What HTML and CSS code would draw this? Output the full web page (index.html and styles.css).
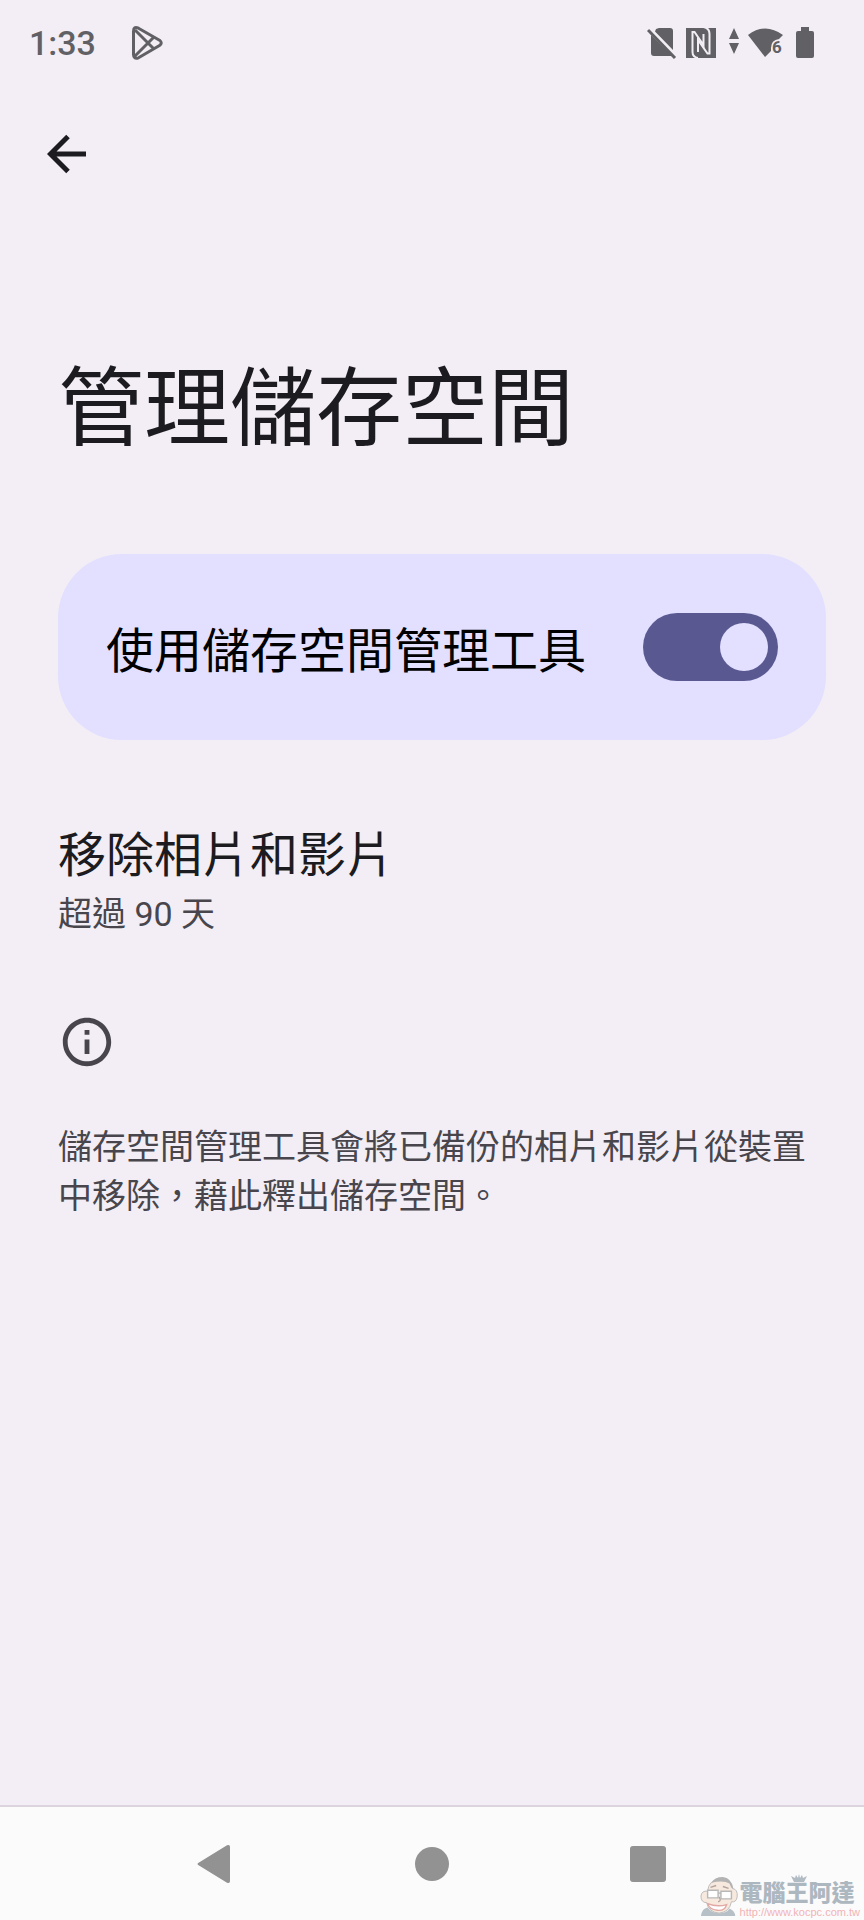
FILE: index.html
```html
<!DOCTYPE html>
<html lang="zh-Hant">
<head>
    <meta charset="UTF-8">
    <meta name="viewport" content="width=device-width, initial-scale=1.0">
    <title>管理儲存空間</title>
    <link rel="stylesheet" href="styles.css">
</head>
<body>
    <div class="status-bar">
        <div class="status-left">
            <span class="clock">1:33</span>
            <svg class="play-icon" width="34" height="36" viewBox="0 0 34 36">
                <path d="M2.500 6.500Q2.500 .8 7.500 3.200L28.500 15.200Q32 18 28.500 20.500L7.500 32.800Q2.500 34.500 2.500 29.500ZM4 5L23 24M4 31L23 12"/>
            </svg>
        </div>
        <div class="status-icons">
            <svg width="30" height="32" viewBox="0 0 30 32">
                <path class="fill" d="M9 2L12 1H23Q26 1 26 4V23L8 4.500ZM4 8L25 29H7Q4 29 4 26Z"/>
                <path class="line" d="M1 3L28 31"/>
            </svg>
            <svg width="32" height="32" viewBox="0 0 32 32">
                <path class="fill" d="M1 1H31V31H1Z"/>
                <path class="cut" d="M13 31Q7.500 30 7.500 25V5H9.500L18.500 18V7"/>
                <path class="cut" d="M13 25V13L22.500 26.500H24.500V7Q24.500 1 18.500 0"/>
            </svg>
            <svg class="arrows" width="10" height="32" viewBox="0 0 10 32">
                <path class="fill" d="M5 1L10 12H0ZM0 16H10L5 27Z"/>
            </svg>
            <svg width="38" height="32" viewBox="0 0 38 32">
                <path class="fill" d="M1 8Q18-5 36 8L32 12Q24 13 24 21V24L18 30Z"/>
                <text x="25" y="26" class="wifi-num">6</text>
            </svg>
            <svg class="battery" width="20" height="32" viewBox="0 0 20 32">
                <path class="fill" d="M6 0H14V4H17Q19 4 19 6V29Q19 31 17 31H3Q1 31 1 29V6Q1 4 3 4H6Z"/>
            </svg>
        </div>
    </div>

    <header class="toolbar">
        <button class="back-button" type="button" aria-label="返回">
            <svg width="40" height="40" viewBox="0 0 40 40">
                <path d="M39 20H4M21 2.500L3.500 20L21 37.500"/>
            </svg>
        </button>
    </header>

    <main class="content">
        <h1 class="page-title">管理儲存空間</h1>

        <div class="switch-card">
            <label for="storageManager">使用儲存空間管理工具</label>
            <input type="checkbox" role="switch" id="storageManager" class="switch" checked>
        </div>

        <button class="preference" type="button">
            <span class="preference-title">移除相片和影片</span>
            <span class="preference-summary">超過 90 天</span>
        </button>

        <div class="footer-info">
            <svg width="58" height="58" viewBox="0 0 24 24">
                <path d="M11 7h2v2h-2zm0 4h2v6h-2zm1-9C6.480 2 2 6.480 2 12s4.480 10 10 10 10-4.480 10-10S17.520 2 12 2zm0 18c-4.410 0-8-3.590-8-8s3.590-8 8-8 8 3.590 8 8-3.590 8-8 8z"/>
            </svg>
            <p>儲存空間管理工具會將已備份的相片和影片從裝置中移除，藉此釋出儲存空間。</p>
        </div>
    </main>

    <nav class="nav-bar">
        <div class="nav-buttons">
            <button type="button" aria-label="返回">
                <svg width="40" height="40" viewBox="0 0 40 40">
                    <path d="M3 18.500L31 1.300Q34 0 34 3V37Q34 40 31 38.700L3 21.500Q0 20 3 18.500Z"/>
                </svg>
            </button>
            <button type="button" aria-label="主畫面">
                <svg width="40" height="40" viewBox="0 0 40 40">
                    <circle cx="20" cy="20" r="17"/>
                </svg>
            </button>
            <button type="button" aria-label="最近使用">
                <svg width="40" height="40" viewBox="0 0 40 40">
                    <rect x="2" y="2" width="36" height="36" rx="3"/>
                </svg>
            </button>
        </div>
        <div class="watermark">
            <svg class="face" width="40" height="44" viewBox="0 0 42 44">
                <path fill="#f8e9df" stroke="#bbb" stroke-width="1" d="M8 17Q9 5 21 5Q33 5 34 14Q40 15 39 23Q38 29 33 28Q31 39 20 40Q9 39 7 29Q1 29 1 22Q2 16 8 17Z"/>
                <path fill="#b3b3b3" d="M12 8Q15 2 24 2Q33 3 35 14Q33 15 31 9Q25 5 12 8Z"/>
                <path fill="#b7c0c7" d="M1 43Q2 35 8 34Q12 40 20 40Q28 40 31 35Q37 38 37 43Z"/>
                <path fill="none" stroke="#b3a59e" stroke-width="1.500" d="M11 13L17 11M24 12L30 14M20 23Q23 27 19 28"/>
                <path fill="#fff" stroke="#b8b8b8" stroke-width="1.500" d="M8 16H19V24H8ZM22 17H33V25H22ZM19 19H22"/>
                <path fill="#fff" stroke="#e2a9a4" stroke-width="1.500" d="M8 30Q18 34 28 31Q26 38 18 37Q10 36 8 30Z"/>
            </svg>
            <div class="watermark-text">
                <svg class="crown" width="16" height="8" viewBox="0 0 16 8">
                    <path d="M3 8L0 2L4 4L5 1L7 4L8 0L9 4L11 1L12 4L16 2L13 8Z"/>
                </svg>
                <span class="watermark-name">電腦王阿達</span>
                <span class="watermark-url">http://www.kocpc.com.tw</span>
            </div>
        </div>
    </nav>
</body>
</html>
```
FILE: styles.css
```css
* {
    box-sizing: border-box;
}
body {
    margin: 0;
    min-height: 100vh;
    display: flex;
    flex-direction: column;
    background-color: #f3eef5;
    color: #1c1b20;
    font-family: Roboto, "Noto Sans CJK TC", sans-serif;
}
svg {
    display: block;
}
button {
    margin: 0;
    padding: 0;
    border: none;
    background: none;
    color: inherit;
    font: inherit;
    text-align: left;
}

/* status bar */
.status-bar {
    display: flex;
    justify-content: space-between;
    align-items: center;
    height: 86px;
    padding: 0 49px 0 29px;
    color: #616064;
}
.status-left, .status-icons {
    display: flex;
    align-items: center;
}
.status-left {
    gap: 35px;
}
.clock {
    font-size: 34px;
    font-weight: 500;
    line-height: 44px;
}
.play-icon path {
    fill: none;
    stroke: #616064;
    stroke-width: 3;
    stroke-linejoin: round;
}
.status-icons {
    gap: 8px;
}
.status-icons .fill {
    fill: #616064;
}
.status-icons .line {
    fill: none;
    stroke: #616064;
    stroke-width: 3;
}
.status-icons .cut {
    fill: none;
    stroke: #f3eef5;
    stroke-width: 2;
}
.arrows {
    margin-left: 4px;
}
.battery {
    margin-left: 2px;
}
.wifi-num {
    fill: #616064;
    font-size: 17px;
    font-weight: 700;
}

/* toolbar */
.toolbar {
    display: flex;
    align-items: center;
    height: 136px;
    padding: 0 47px;
}
.back-button path {
    fill: none;
    stroke: #1c1b20;
    stroke-width: 5;
}

/* content */
.content {
    flex: 1;
    padding: 132px 38px 48px 58px;
}
.page-title {
    margin: 0 0 88px;
    font-size: 86px;
    font-weight: 400;
    line-height: 112px;
}
.switch-card {
    display: flex;
    justify-content: space-between;
    align-items: center;
    min-height: 186px;
    padding: 0 48px;
    border-radius: 64px;
    background-color: #e2dfff;
    color: #000;
    font-size: 48px;
}
.switch {
    appearance: none;
    display: flex;
    align-items: center;
    justify-content: flex-end;
    flex-shrink: 0;
    width: 135px;
    height: 68px;
    margin: 0;
    padding: 10px;
    border-radius: 34px;
    background-color: #5a5891;
}
.switch::before {
    content: "";
    width: 48px;
    height: 48px;
    border-radius: 50%;
    background-color: #e2dfff;
}
.switch:not(:checked) {
    justify-content: flex-start;
}
.preference {
    display: flex;
    flex-direction: column;
    gap: 2px;
    width: 100%;
    margin-top: 84px;
}
.preference-title {
    font-size: 48px;
    line-height: 64px;
}
.preference-summary {
    color: #48464c;
    font-size: 34px;
    line-height: 49px;
}
.footer-info {
    margin-top: 74px;
    color: #48464c;
    font-size: 34px;
    line-height: 49px;
}
.footer-info svg {
    fill: #48464c;
}
.footer-info p {
    margin: 52px 0 0;
}

/* navigation bar */
.nav-bar {
    position: relative;
    height: 115px;
    border-top: 2px solid #dcd5df;
    background-color: #fbfbfb;
}
.nav-buttons {
    display: grid;
    grid-template-columns: repeat(3, 1fr);
    align-items: center;
    width: 75%;
    height: 100%;
    margin: 0 auto;
}
.nav-buttons button {
    display: flex;
    justify-content: center;
}
.nav-buttons svg {
    fill: #929292;
}
.watermark {
    position: absolute;
    right: 4px;
    bottom: 2px;
    display: flex;
    align-items: flex-end;
}
.watermark-text {
    display: flex;
    flex-direction: column;
}
.crown {
    margin-left: 51px;
    fill: #b1bbc3;
}
.watermark-name {
    color: #adb7bf;
    font-size: 23px;
    font-weight: 900;
    line-height: 24px;
}
.watermark-url {
    color: #f2b3b6;
    font-family: "Liberation Sans", sans-serif;
    font-size: 11px;
    line-height: 12px;
}
```
